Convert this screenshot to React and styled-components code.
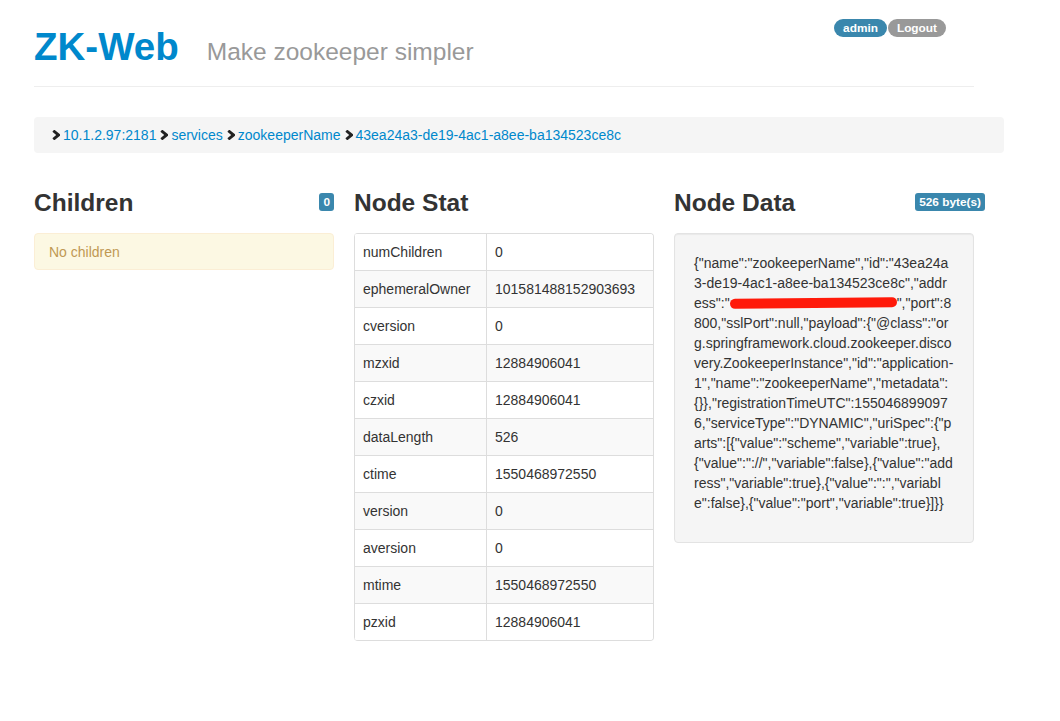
import React from "react";
import styled, { createGlobalStyle } from "styled-components";

const GlobalStyle = createGlobalStyle`
  body {
    margin: 0;
    background: #fff;
    font-family: "Liberation Sans", Arial, sans-serif;
    font-size: 14px;
    line-height: 20px;
    color: #333;
  }
`;

const Page = styled.div`
  padding: 17px 0 40px 34px;
  width: 970px;
`;

const Header = styled.div`
  display: flex;
  align-items: flex-start;
  justify-content: space-between;
  width: 940px;
  padding-bottom: 9px;
  border-bottom: 1px solid #eee;
  margin-bottom: 30px;
`;

const Title = styled.h1`
  margin: 10px 0;
  font-size: 38.5px;
  line-height: 40px;
  height: 40px;
  font-weight: bold;
  color: #0088cc;
`;

const Subtitle = styled.small`
  margin-left: 28px;
  font-size: 24.5px;
  line-height: 1;
  font-weight: normal;
  color: #999;
`;

const UserBox = styled.div`
  display: flex;
  gap: 1px;
  margin: 2px 28px 0 0;
`;

const Pill = styled.span`
  display: inline-block;
  padding: 2px 9px;
  border-radius: 9px;
  font-size: 11.844px;
  line-height: 14px;
  font-weight: bold;
  color: #fff;
  background: ${(p) => p.bg};
`;

const Breadcrumb = styled.ul`
  display: flex;
  align-items: center;
  list-style: none;
  margin: 0 0 20px;
  padding: 8px 15px;
  background: #f5f5f5;
  border-radius: 4px;
`;

const Crumb = styled.li`
  display: flex;
  align-items: center;
  svg {
    margin: 0 3px 0 ${(p) => (p.first ? "3px" : "4px")};
  }
`;

const CrumbLink = styled.a`
  color: #0088cc;
  text-decoration: none;
`;

const Columns = styled.div`
  display: grid;
  grid-template-columns: 300px 300px 300px;
  column-gap: 20px;
  align-items: start;
`;

const Column = styled.div``;

const Head = styled.div`
  display: flex;
  align-items: center;
  justify-content: space-between;
  margin: 10px ${(p) => (p.overhang ? "-11px" : "0")} 10px 0;
`;

const Heading = styled.h3`
  margin: 0;
  font-size: 24.5px;
  line-height: 40px;
  font-weight: bold;
  color: #333;
`;

const Label = styled.span`
  display: inline-block;
  padding: 2px 4px;
  border-radius: 3px;
  font-size: 11.844px;
  line-height: 14px;
  font-weight: bold;
  color: #fff;
  background: #3a87ad;
  margin-top: -3px;
`;

const Alert = styled.div`
  padding: 8px 35px 7px 14px;
  background: #fcf8e3;
  border: 1px solid #fbeed5;
  border-radius: 4px;
  color: #c09853;
`;

const Table = styled.table`
  width: 100%;
  border-collapse: separate;
  border-spacing: 0;
  border: 1px solid #ddd;
  border-left: 0;
  border-radius: 4px;
  overflow: hidden;
`;

const Row = styled.tr`
  background: ${(p) => (p.striped ? "#f9f9f9" : "#fff")};
`;

const Cell = styled.td`
  padding: 8px;
  line-height: 20px;
  text-align: left;
  vertical-align: top;
  border-left: 1px solid #ddd;
  border-top: ${(p) => (p.first ? "0" : "1px solid #ddd")};
  width: ${(p) => p.w || "auto"};
`;

const Well = styled.div`
  padding: 19px;
  background: #f5f5f5;
  border: 1px solid #e3e3e3;
  border-radius: 4px;
  box-shadow: inset 0 1px 1px rgba(0, 0, 0, 0.05);
`;

const DataText = styled.p`
  margin: 0 0 10px;
  word-break: break-all;
`;

/* marker stroke hiding the address in the screenshot */
const Redacted = styled.span`
  display: inline-block;
  width: 167px;
  height: 10px;
  vertical-align: 0;
  background: #ff1a0a;
  border-radius: 5px;
  transform: rotate(-0.6deg);
`;

const Chevron = () => (
  <svg width="8" height="10" viewBox="0 0 8 10">
    <path d="M1.3 0.7 L6.6 5 L1.3 9.3" fill="none" stroke="#222" strokeWidth="2.9" />
  </svg>
);

const crumbs = ["10.1.2.97:2181", "services", "zookeeperName", "43ea24a3-de19-4ac1-a8ee-ba134523ce8c"];

const stats = [
  ["numChildren", "0"],
  ["ephemeralOwner", "101581488152903693"],
  ["cversion", "0"],
  ["mzxid", "12884906041"],
  ["czxid", "12884906041"],
  ["dataLength", "526"],
  ["ctime", "1550468972550"],
  ["version", "0"],
  ["aversion", "0"],
  ["mtime", "1550468972550"],
  ["pzxid", "12884906041"],
];

const before =
  '{"name":"zookeeperName","id":"43ea24a3-de19-4ac1-a8ee-ba134523ce8c","address":"';
const after =
  '","port":8800,"sslPort":null,"payload":{"@class":"org.springframework.cloud.zookeeper.discovery.ZookeeperInstance","id":"application-1","name":"zookeeperName","metadata":{}},"registrationTimeUTC":1550468990976,"serviceType":"DYNAMIC","uriSpec":{"parts":[{"value":"scheme","variable":true},{"value":"://","variable":false},{"value":"address","variable":true},{"value":":","variable":false},{"value":"port","variable":true}]}}';

const App = () => (
  <Page>
    <GlobalStyle />
    <Header>
      <Title>
        ZK-Web<Subtitle>Make zookeeper simpler</Subtitle>
      </Title>
      <UserBox>
        <Pill bg="#3a87ad">admin</Pill>
        <Pill bg="#999">Logout</Pill>
      </UserBox>
    </Header>

    <Breadcrumb>
      {crumbs.map((c, i) => (
        <Crumb key={c} first={i === 0}>
          <Chevron />
          <CrumbLink href="#">{c}</CrumbLink>
        </Crumb>
      ))}
    </Breadcrumb>

    <Columns>
      <Column>
        <Head>
          <Heading>Children</Heading>
          <Label>0</Label>
        </Head>
        <Alert>No children</Alert>
      </Column>

      <Column>
        <Head>
          <Heading>Node Stat</Heading>
        </Head>
        <Table>
          <tbody>
            {stats.map(([k, v], i) => (
              <Row key={k} striped={i % 2 === 1}>
                <Cell first={i === 0} w="115px">{k}</Cell>
                <Cell first={i === 0}>{v}</Cell>
              </Row>
            ))}
          </tbody>
        </Table>
      </Column>

      <Column>
        <Head overhang>
          <Heading>Node Data</Heading>
          <Label>526 byte(s)</Label>
        </Head>
        <Well>
          <DataText>
            {before}
            <Redacted />
            {after}
          </DataText>
        </Well>
      </Column>
    </Columns>
  </Page>
);

export default App;
